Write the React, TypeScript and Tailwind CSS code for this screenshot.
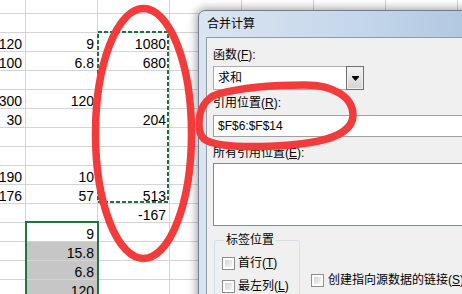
import React from 'react';

const rows: string[][] = [
    ['', '', ''],
    ['120', '9', '1080'],
    ['100', '6.8', '680'],
    ['', '', ''],
    ['300', '120', ''],
    ['30', '', '204'],
    ['', '', ''],
    ['', '', ''],
    ['190', '10', ''],
    ['176', '57', '513'],
    ['', '', '-167'],
    ['', '9', ''],
    ['', '15.8', ''],
    ['', '6.8', ''],
    ['', '120', ''],
];

const Checkbox: React.FC = () => (
    <div className="w-[13px] h-[13px] border border-[#8e8f8f] bg-white p-[2px] shrink-0">
        <div className="w-full h-full bg-gradient-to-br from-[#d4d4d4] to-[#f6f6f6]" />
    </div>
);

const Sheet: React.FC = () => (
    <div className="grid grid-cols-[26px_repeat(7,72px)] font-['Liberation_Sans',Arial,sans-serif] text-[14px] text-black">
        {Array.from({ length: 8 }).map((_, c) => (
            <div key={`h${c}`} className="h-[14px] border-r border-b border-[#d4d4d4]" />
        ))}
        {rows.map((row, r) =>
            Array.from({ length: 8 }).map((_, c) => {
                const val = c < 3 ? row[c] : '';
                const gray = c === 1 && r >= 12;
                return (
                    <div
                        key={`${r}-${c}`}
                        className={`h-[19px] border-r border-b border-[#d4d4d4] flex justify-end items-start pt-[3px] pr-[3px] leading-[16px] whitespace-nowrap ${gray ? 'bg-[#c6c6c6]' : ''}`}
                    >
                        {val}
                    </div>
                );
            })
        )}
    </div>
);

const Dialog: React.FC = () => (
    <div className="absolute left-[198px] top-[10px] w-[330px] h-[300px] rounded-tl-[7px] border border-[#6f7f93] bg-gradient-to-r from-[#dbe5f0] via-[#c3d6eb] to-[#a8bfdb] shadow-[0_0_9px_2px_rgba(0,0,0,0.35)] font-['Liberation_Sans','Noto_Sans_CJK_SC',sans-serif] text-[12px] text-black">
        <div className="h-[26px] flex items-center pl-[8px] leading-[16px]">合并计算</div>
        <div className="ml-[7px] h-full border-l border-t border-[#8e9bab] bg-[#f0f0f0] pl-[6px] flex flex-col">
            <div className="mt-[9px] h-[16px] leading-[16px]">
                函数(<span className="underline">F</span>):
            </div>
            <div className="mt-[3px] flex h-[24px] w-[151px]">
                <div className="flex-1 border border-r-0 border-[#abadb3] bg-white pl-[4px] flex items-center leading-[16px]">求和</div>
                <div className="w-[18px] border border-[#707070] p-px">
                    <div className="h-full w-full bg-gradient-to-b from-[#f2f2f2] to-[#d6d6d6] flex items-center justify-center">
                        <svg width="7" height="5" viewBox="0 0 7 5">
                            <rect x="0" y="0" width="7" height="1" fill="#000" />
                            <polygon points="0,1 7,1 3.5,5" fill="#000" />
                        </svg>
                    </div>
                </div>
            </div>
            <div className="mt-[5px] h-[16px] leading-[16px]">
                引用位置(<span className="underline">R</span>):
            </div>
            <div className="mt-[4px] h-[22px] w-[300px] border border-[#a0a0a0] bg-white pl-[4px] flex items-center leading-[16px]">
                $F$6:$F$14
            </div>
            <div className="mt-[8px] h-[16px] leading-[16px]">
                所有引用位置(<span className="underline">E</span>):
            </div>
            <div className="mt-[2px] h-[63px] w-[300px] border border-[#828790] bg-white" />
            <div className="flex items-start">
                <fieldset className="mt-[6px] ml-px w-[86px] h-[90px] border border-[#d5dfe5] rounded-[3px] pl-[7px]">
                    <legend className="ml-[2px] px-[2px] leading-[16px]">标签位置</legend>
                    <div className="mt-[7px] h-[16px] flex items-center gap-[3px] leading-[16px]">
                        <Checkbox />
                        <span>首行(<span className="underline">T</span>)</span>
                    </div>
                    <div className="mt-[7px] h-[16px] flex items-center gap-[3px] leading-[16px]">
                        <Checkbox />
                        <span>最左列(<span className="underline">L</span>)</span>
                    </div>
                </fieldset>
                <div className="mt-[46px] ml-[11px] h-[16px] flex items-center gap-[4px] leading-[16px] whitespace-nowrap">
                    <Checkbox />
                    <span>创建指向源数据的链接(<span className="underline">S</span>)</span>
                </div>
            </div>
        </div>
    </div>
);

const App: React.FC = () => {
    return (
        <div className="relative w-[462px] h-[294px] overflow-hidden bg-white">
            <Sheet />
            {/* selection marks */}
            <svg className="absolute left-0 top-0 pointer-events-none" width="462" height="294">
                <rect x="98" y="32" width="70" height="170" fill="none" stroke="#21703f" strokeWidth="2" strokeDasharray="4 2" />
                <rect x="26" y="222" width="72" height="90" fill="none" stroke="#217346" strokeWidth="2" />
            </svg>
            <Dialog />
            {/* red pen marks */}
            <svg className="absolute left-0 top-0 pointer-events-none" width="462" height="294">
                <ellipse cx="143.5" cy="133.5" rx="48" ry="125" fill="none" stroke="#f43b3b" strokeWidth="7.5" />
                <path
                    d="M 199,125 C 199,110 205,98 218,94 C 240,88 275,85 305,85 C 335,85 353,98 353,115 C 353,132 330,142 290,145 C 250,148 215,147 204,139 C 200,135 199,130 199,125 Z"
                    fill="none"
                    stroke="#f43b3b"
                    strokeWidth="7.5"
                />
            </svg>
        </div>
    );
};

export default App;
